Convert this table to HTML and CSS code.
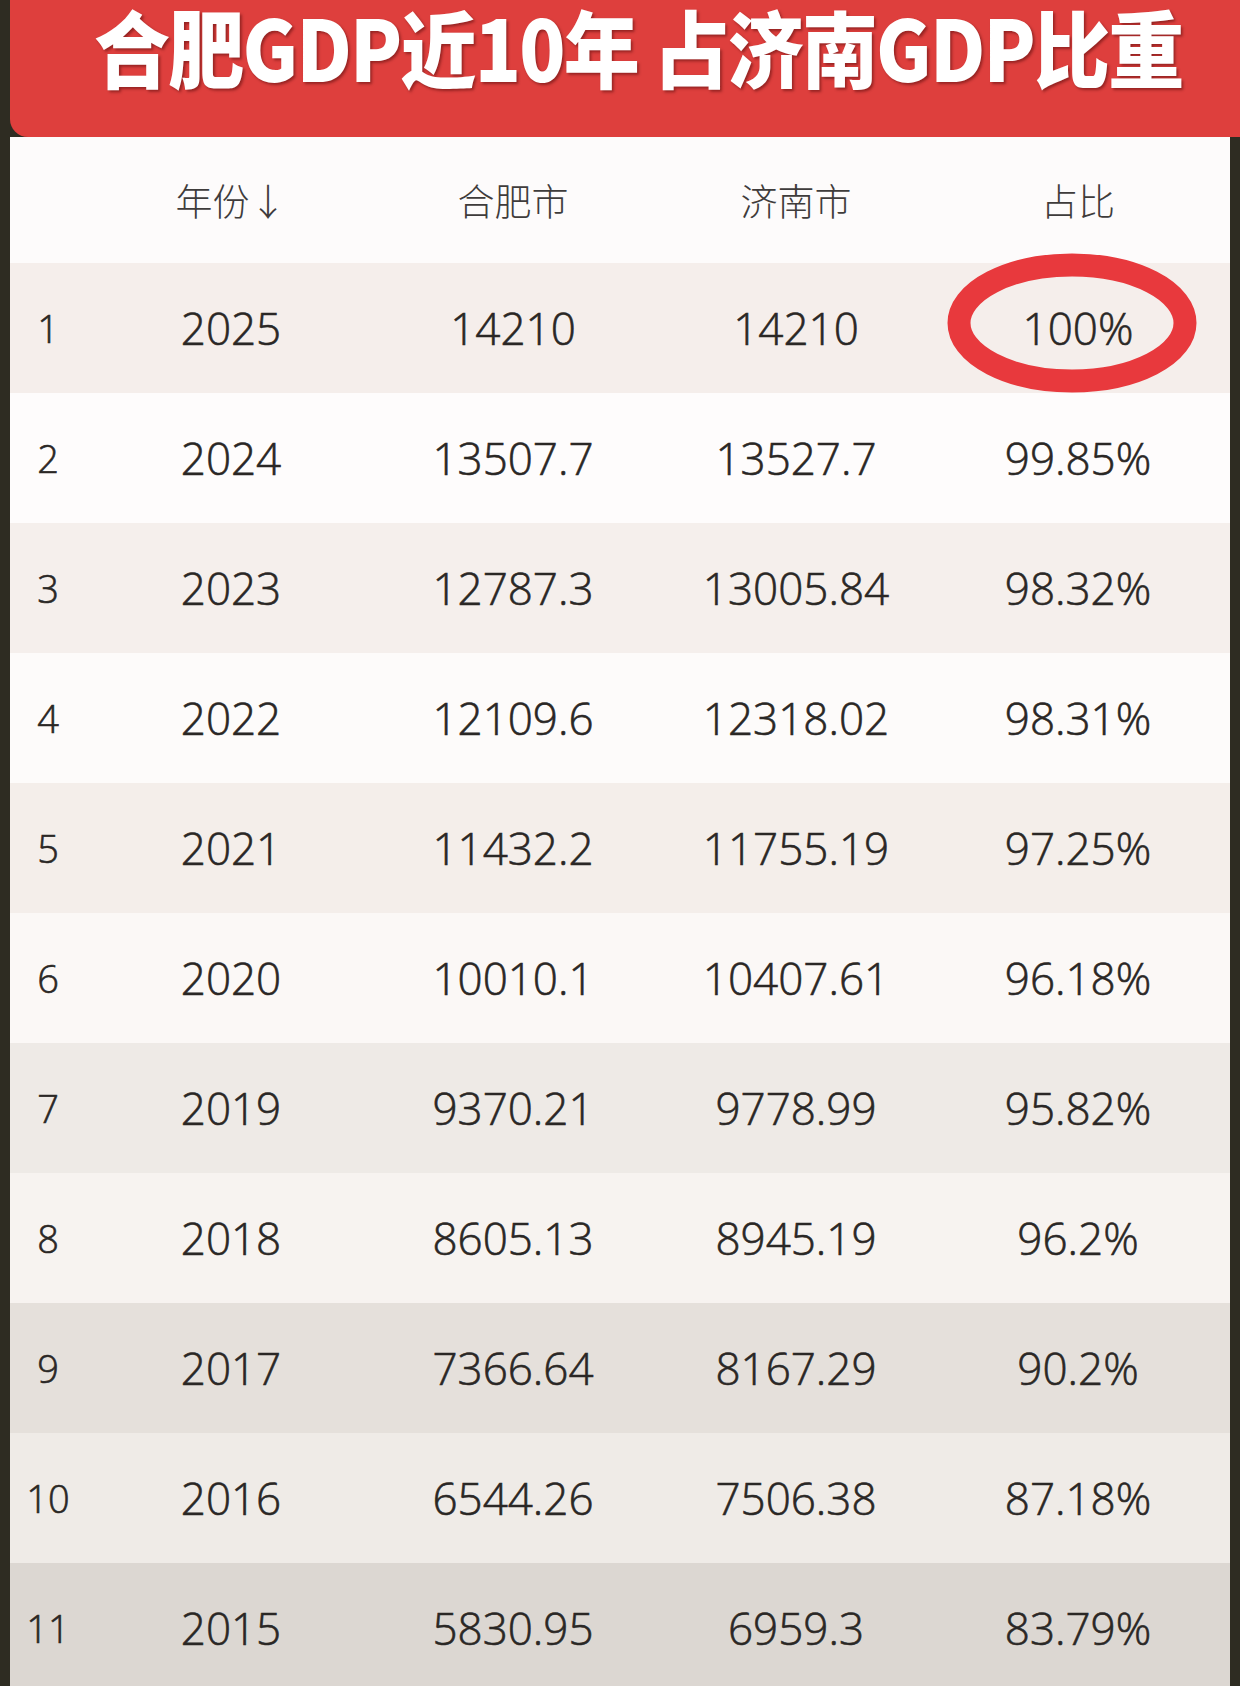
FILE: index.html
```html
<!DOCTYPE html>
<html lang="zh-CN">
<head>
<meta charset="utf-8">
<title>合肥GDP近10年占济南GDP比重</title>
<link rel="stylesheet" href="styles.css">
</head>
<body>
<div class="page">
  <header class="banner">
    <h1 class="title">合肥GDP近10年 占济南GDP比重</h1>
  </header>
  <div class="table">
    <div class="row head">
      <span class="cell idx"></span>
      <span class="cell">年份↓</span>
      <span class="cell">合肥市</span>
      <span class="cell">济南市</span>
      <span class="cell">占比</span>
    </div>
    <div class="row r1">
      <span class="cell idx">1</span><span class="cell">2025</span><span class="cell">14210</span><span class="cell">14210</span>
      <span class="cell ratio">100%<svg class="ring" width="260" height="150" viewBox="0 0 260 150"><ellipse cx="130" cy="75" rx="113" ry="58" fill="none" stroke="#e8393d" stroke-width="23"/></svg></span>
    </div>
    <div class="row r2">
      <span class="cell idx">2</span><span class="cell">2024</span><span class="cell">13507.7</span><span class="cell">13527.7</span><span class="cell">99.85%</span>
    </div>
    <div class="row r3">
      <span class="cell idx">3</span><span class="cell">2023</span><span class="cell">12787.3</span><span class="cell">13005.84</span><span class="cell">98.32%</span>
    </div>
    <div class="row r4">
      <span class="cell idx">4</span><span class="cell">2022</span><span class="cell">12109.6</span><span class="cell">12318.02</span><span class="cell">98.31%</span>
    </div>
    <div class="row r5">
      <span class="cell idx">5</span><span class="cell">2021</span><span class="cell">11432.2</span><span class="cell">11755.19</span><span class="cell">97.25%</span>
    </div>
    <div class="row r6">
      <span class="cell idx">6</span><span class="cell">2020</span><span class="cell">10010.1</span><span class="cell">10407.61</span><span class="cell">96.18%</span>
    </div>
    <div class="row r7">
      <span class="cell idx">7</span><span class="cell">2019</span><span class="cell">9370.21</span><span class="cell">9778.99</span><span class="cell">95.82%</span>
    </div>
    <div class="row r8">
      <span class="cell idx">8</span><span class="cell">2018</span><span class="cell">8605.13</span><span class="cell">8945.19</span><span class="cell">96.2%</span>
    </div>
    <div class="row r9">
      <span class="cell idx">9</span><span class="cell">2017</span><span class="cell">7366.64</span><span class="cell">8167.29</span><span class="cell">90.2%</span>
    </div>
    <div class="row r10">
      <span class="cell idx">10</span><span class="cell">2016</span><span class="cell">6544.26</span><span class="cell">7506.38</span><span class="cell">87.18%</span>
    </div>
    <div class="row r11">
      <span class="cell idx">11</span><span class="cell">2015</span><span class="cell">5830.95</span><span class="cell">6959.3</span><span class="cell">83.79%</span>
    </div>
  </div>
</div>
</body>
</html>
```

FILE: styles.css
```css
html, body {
  margin: 0;
  padding: 0;
}
body {
  width: 1240px;
  height: 1686px;
  overflow: hidden;
  background: #2e2c22;
  font-family: "Open Sans", "Noto Sans", "Noto Sans CJK SC", sans-serif;
  font-weight: 300;
  color: #2a2725;
}
.page {
  display: flex;
  flex-direction: column;
}
.banner {
  margin-left: 10px;
  height: 137px;
  background: #de3f3d;
  border-bottom-left-radius: 18px;
  display: flex;
  justify-content: center;
  align-items: flex-start;
  padding-left: 26px;
}
.title {
  margin: 0;
  padding-top: 4px;
  font-family: "Noto Sans CJK SC", sans-serif;
  font-weight: 900;
  font-size: 84px;
  line-height: 84px;
  color: #ffffff;
  white-space: pre;
  text-shadow: 2px 2px 3px rgba(60, 0, 0, 0.45);
  letter-spacing: -2px;
  transform: scaleX(0.905);
}
.table {
  margin-left: 10px;
  width: 1220px;
  background: #fdfbfb;
  display: flex;
  flex-direction: column;
}
.row {
  display: grid;
  grid-template-columns: 76px 290px 274px 292px 272px 1fr;
  height: 130px;
  font-size: 44px;
  -webkit-text-stroke: 0.6px #2a2725;
}
.cell {
  display: flex;
  align-items: center;
  justify-content: center;
}
.row .idx {
  font-size: 38px;
}
.head {
  height: 126px;
  font-family: "Noto Sans CJK SC", sans-serif;
  font-weight: 300;
  font-size: 37px;
  color: #3f3c3b;
  background: #fdfbfb;
  -webkit-text-stroke: 0;
}
.ratio {
  position: relative;
}
.ring {
  position: absolute;
  left: 0;
  top: -15px;
}
.r1 { background: #f5eeeb; }
.r2 { background: #fefcfc; }
.r3 { background: #f5efec; }
.r4 { background: #fdfbfa; }
.r5 { background: #f4eeea; }
.r6 { background: #fbf8f6; }
.r7 { background: #eeeae6; }
.r8 { background: #f7f3f0; }
.r9 { background: #e5e0db; }
.r10 { background: #efebe7; }
.r11 { background: #dcd7d2; }
```
